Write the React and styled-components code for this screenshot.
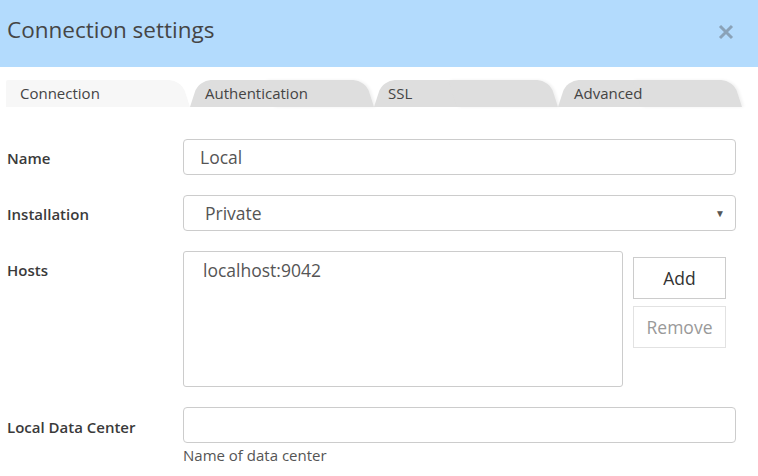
import React from 'react';
import styled, { createGlobalStyle } from 'styled-components';

const GlobalStyle = createGlobalStyle`
  body {
    margin: 0;
    background: #fff;
    font-family: "Open Sans", "Liberation Sans", sans-serif;
    color: #333;
  }
`;

const Dialog = styled.div`
  width: 758px;
  height: 476px;
  overflow: hidden;
  background: #fff;
`;

const Header = styled.div`
  height: 67px;
  background: #b3dbfd;
  display: flex;
  align-items: center;
  justify-content: space-between;
  padding: 0 22px 0 7px;
  box-sizing: border-box;
`;

const Title = styled.h1`
  margin: 0 0 8px;
  font-size: 22.5px;
  font-weight: 400;
  color: #454545;
`;

const CloseButton = styled.button`
  border: none;
  background: none;
  padding: 0;
  width: 20px;
  height: 20px;
  margin-bottom: 4px;
  cursor: pointer;
  display: flex;
  align-items: center;
  justify-content: center;
`;

const TabStrip = styled.div`
  display: flex;
  padding: 13px 0 0 6px;
  height: 40px;
  box-sizing: border-box;
`;

const Tab = styled.div`
  position: relative;
  width: 184px;
  height: 27px;
  flex-shrink: 0;
  z-index: ${(p) => (p.$active ? 2 : 1)};
  font-size: 15px;
  color: #444;
  cursor: pointer;

  &::before,
  &::after {
    content: '';
    position: absolute;
    top: 0;
    bottom: 0;
    width: 55%;
    background: ${(p) => (p.$active ? '#f7f7f7' : '#dedede')};
    transform-origin: bottom;
  }

  &::before {
    left: 0;
    border-top-left-radius: ${(p) => (p.$first ? '2px' : '12px')};
    transform: ${(p) => (p.$first ? 'none' : 'skewX(-18deg)')};
  }

  &::after {
    right: 0;
    border-top-right-radius: 12px;
    transform: skewX(18deg);
    box-shadow: ${(p) => (p.$active ? 'none' : '2px 0 3px rgba(0, 0, 0, 0.06)')};
  }
`;

const TabLabel = styled.span`
  position: relative;
  z-index: 1;
  display: block;
  padding: 3px 0 0 ${(p) => p.$indent}px;
`;

const Form = styled.div`
  display: grid;
  grid-template-columns: 176px 1fr;
  row-gap: 20px;
  padding: 32px 22px 0 7px;
`;

const Label = styled.label`
  font-size: 15px;
  font-weight: 600;
  color: #3a3a3a;
  padding-top: ${(p) => p.$top || 9}px;
`;

const Field = styled.div`
  display: flex;
  flex-direction: column;
`;

const TextInput = styled.input`
  height: 36px;
  box-sizing: border-box;
  border: 1px solid #ccc;
  border-radius: 4px;
  padding: 0 16px;
  font-family: inherit;
  font-size: 17.5px;
  color: #555;
  outline: none;
`;

const SelectBox = styled.div`
  height: 36px;
  box-sizing: border-box;
  border: 1px solid #ccc;
  border-radius: 4px;
  padding: 0 10px 0 21px;
  display: flex;
  align-items: center;
  justify-content: space-between;
  font-size: 17.5px;
  color: #555;
`;

const Caret = styled.span`
  font-size: 10px;
  color: #555;
`;

const HostsRow = styled.div`
  display: flex;
  gap: 10px;
`;

const HostList = styled.div`
  width: 440px;
  height: 136px;
  box-sizing: border-box;
  border: 1px solid #ccc;
  border-radius: 3px;
  padding: 6px 19px;
  font-size: 17.5px;
  color: #555;
`;

const ButtonColumn = styled.div`
  display: flex;
  flex-direction: column;
  gap: 7px;
  padding-top: 6px;
`;

const Button = styled.button`
  width: 93px;
  height: 42px;
  box-sizing: border-box;
  background: #fff;
  border: 1px solid ${(p) => (p.disabled ? '#e2e2e2' : '#ccc')};
  border-radius: 0;
  font-family: inherit;
  font-size: 17.5px;
  color: ${(p) => (p.disabled ? '#999' : '#333')};
  cursor: ${(p) => (p.disabled ? 'default' : 'pointer')};
`;

const Help = styled.div`
  font-size: 15px;
  color: #555;
  margin-top: 2px;
`;

const tabs = [
  { name: 'Connection', indent: 14 },
  { name: 'Authentication', indent: 15 },
  { name: 'SSL', indent: 14 },
  { name: 'Advanced', indent: 16 },
];

const App = () => (
  <Dialog>
    <GlobalStyle />
    <Header>
      <Title>Connection settings</Title>
      <CloseButton aria-label="Close">
        <svg width="16" height="16" viewBox="0 0 16 16">
          <path d="M2 2 L14 14 M14 2 L2 14" stroke="#8aa2b8" strokeWidth="3" />
        </svg>
      </CloseButton>
    </Header>
    <TabStrip>
      {tabs.map((t, i) => (
        <Tab key={t.name} $active={i === 0} $first={i === 0}>
          <TabLabel $indent={t.indent}>{t.name}</TabLabel>
        </Tab>
      ))}
    </TabStrip>
    <Form>
      <Label>Name</Label>
      <TextInput defaultValue="Local" />

      <Label>Installation</Label>
      <SelectBox>
        <span>Private</span>
        <Caret>▼</Caret>
      </SelectBox>

      <Label $top={9}>Hosts</Label>
      <HostsRow>
        <HostList>localhost:9042</HostList>
        <ButtonColumn>
          <Button>Add</Button>
          <Button disabled>Remove</Button>
        </ButtonColumn>
      </HostsRow>

      <Label $top={10}>Local Data Center</Label>
      <Field>
        <TextInput />
        <Help>Name of data center</Help>
      </Field>
    </Form>
  </Dialog>
);

export default App;
